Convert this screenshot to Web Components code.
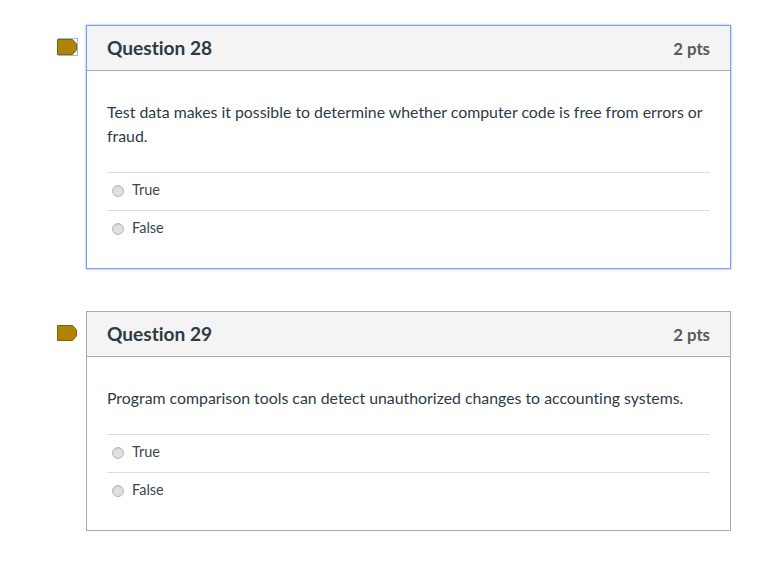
<!DOCTYPE html>
<html>
<head>
<meta charset="utf-8">
<title>Quiz</title>
<style>
	html, body { margin: 0; background: #fff; }
	body { font-family: Lato, "Open Sans", sans-serif; color: #2d3b45; font-variant-ligatures: none; }
	.questions { display: flex; flex-direction: column; gap: 42px; padding: 25px 44px 30px 86px; }
</style>
</head>
<body>
<div class="questions">
	<quiz-question number="28" points="2 pts" active>
		Test data makes it possible to determine whether computer code is free from errors or fraud.
		<quiz-answer slot="answers">True</quiz-answer>
		<quiz-answer slot="answers">False</quiz-answer>
	</quiz-question>
	<quiz-question number="29" points="2 pts">
		Program comparison tools can detect unauthorized changes to accounting systems.
		<quiz-answer slot="answers">True</quiz-answer>
		<quiz-answer slot="answers">False</quiz-answer>
	</quiz-question>
</div>
<script>
class QuizAnswer extends HTMLElement {
	constructor() {
		super();
		this.attachShadow({ mode: 'open' });
	};

	connectedCallback() {
		this.shadowRoot.innerHTML = `<style>
				:host {
					display: flex;
					align-items: center;
					height: 37px;
					border-top: 1px solid #dcdedf;
					padding-left: 5px;
					font-size: 14.5px;
					color: #3a4750;
				}
				.radio {
					box-sizing: border-box;
					width: 12px;
					height: 12px;
					border-radius: 50%;
					border: 1px solid #b8b8b8;
					background: #e0e0e0;
					box-shadow: inset 0 1px 1px #cacaca;
					margin: -1px 8px 0 0;
				}
				label { position: relative; top: -2px; }
			</style>
			<span class="radio"></span><label><slot></slot></label>`;
	};
};

class QuizQuestion extends HTMLElement {
	constructor() {
		super();
		this.attachShadow({ mode: 'open' });
	};

	connectedCallback() {
		const number = this.getAttribute('number');
		const points = this.getAttribute('points');
		this.shadowRoot.innerHTML = `<style>
				:host {
					display: block;
					position: relative;
					border: 1px solid #a9a9a9;
				}
				:host([active]) {
					border: 1px solid #7c9ff0;
					box-shadow: 0 0 2px #7c9ff0;
				}
				header {
					display: flex;
					justify-content: space-between;
					align-items: center;
					height: 44px;
					padding: 0 20px;
					background: #f4f4f4;
					border-bottom: 1px solid #a9a9a9;
				}
				h2 { margin: -2px 0 0; font-size: 19.1px; font-weight: 700; color: #2d3b45; }
				.pts { margin-top: 0; font-size: 16.8px; font-weight: 700; color: #59595b; }
				.body { padding: 29px 20px 20px; }
				.text { font-size: 15.85px; line-height: 24px; margin-bottom: 24px; }
				.flag { position: absolute; left: -30px; top: 13px; }
				:host([active]) .flag { box-shadow: 1px -1px 0 #9db8f5, 1px 1px 0 #9db8f5; }
				svg { display: block; }
			</style>
			<div class="flag">
				<svg width="20" height="16" viewBox="0 0 20 16"><path d="M.5.5H15.5L19.5 5V11L15.5 15.5H.5Z" fill="#b08400" stroke="#7a6410"/></svg>
			</div>
			<header><h2>Question ${number}</h2><span class="pts">${points}</span></header>
			<div class="body">
				<div class="text"><slot></slot></div>
				<div class="answers"><slot name="answers"></slot></div>
			</div>`;
	};
};

customElements.define('quiz-answer', QuizAnswer);
customElements.define('quiz-question', QuizQuestion);
</script>
</body>
</html>
